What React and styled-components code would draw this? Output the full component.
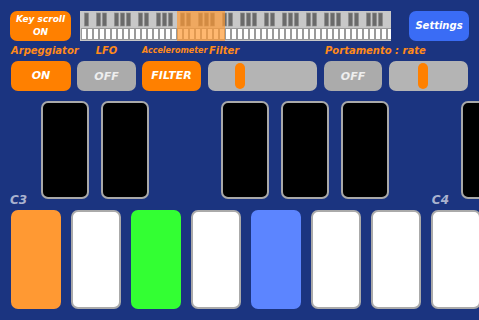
import styled, { createGlobalStyle } from 'styled-components';

const GlobalStyle = createGlobalStyle`
    html, body {
        margin: 0;
        padding: 0;
        background: #1b3480;
    }
    body {
        font-family: "DejaVu Sans", Verdana, sans-serif;
    }
`;

const TOTAL_WHITE = 52;
const KEY_W = 6;
const BLACK_PATTERN = [1, 0, 1, 1, 0, 1, 1]; // after A, B, C, D, E, F, G

const MiniKeyboard = () => {
    const whites = [];
    const blacks = [];
    for (let i = 0; i < TOTAL_WHITE; i++) {
        const x = 1 + i * KEY_W;
        whites.push(<rect key={i} x={x + 0.5} y={17.5} width={KEY_W - 1} height={11} fill='#ffffff' stroke='#9a9a9a' strokeWidth='1' />);
        if (BLACK_PATTERN[i % 7] && i < TOTAL_WHITE - 1) {
            blacks.push(<rect key={i} x={x + KEY_W - 2.5} y={2} width={4} height={13} fill='#6a6a6a' stroke='#8a8a8a' strokeWidth='0.6' />);
        }
    }
    return (
        <MiniBox>
            <svg width='311' height='30' viewBox='0 0 311 30'>
                <rect x='0' y='0' width='311' height='30' fill='#c8c8c8' />
                {blacks}
                {whites}
                <rect x={1 + 16 * KEY_W} y='0' width={8 * KEY_W} height='30' fill='#ff9a33' opacity='0.7' />
            </svg>
        </MiniBox>
    );
};

const blackSlots = [true, true, false, true, true, true, false, true];
const whiteKeys = ['#ff9933', '#ffffff', '#33ff33', '#ffffff', '#5c85ff', '#ffffff', '#ffffff', '#ffffff'];

const App = () => {
    return (
        <>
            <GlobalStyle />
            <Screen>
                <TopBar>
                    <OrangeButton $w={61} $small>
                        Key scroll
                        <br />
                        ON
                    </OrangeButton>
                    <MiniKeyboard />
                    <SettingsButton>Settings</SettingsButton>
                </TopBar>

                <Controls>
                    <Label>Arpeggiator</Label>
                    <Label>LFO</Label>
                    <Label $tiny>Accelerometer</Label>
                    <Label $left>Filter</Label>
                    <Label $left $span>Portamento : rate</Label>

                    <OrangeButton>ON</OrangeButton>
                    <GrayButton>OFF</GrayButton>
                    <OrangeButton>FILTER</OrangeButton>
                    <Slider>
                        <Thumb $pos={27} />
                    </Slider>
                    <GrayButton $inset>OFF</GrayButton>
                    <Slider>
                        <Thumb $pos={29} />
                    </Slider>
                </Controls>

                <BlackRow>
                    {blackSlots.map((on, i) => (on ? <BlackKey key={i} /> : <KeySpacer key={i} />))}
                </BlackRow>

                <OctaveRow>
                    <Octave>C3</Octave>
                    <Octave>C4</Octave>
                </OctaveRow>

                <WhiteRow>
                    {whiteKeys.map((c, i) => (
                        <WhiteKey key={i} $color={c} />
                    ))}
                </WhiteRow>
            </Screen>
        </>
    );
};

export default App;

const Screen = styled.div`
    width: 479px;
    height: 320px;
    overflow: hidden;
    background: #1b3480;
    display: flex;
    flex-direction: column;
    box-sizing: border-box;
    padding-top: 10px;
`;

const TopBar = styled.div`
    display: flex;
    align-items: center;
    height: 31px;
    padding-left: 10px;
`;

const MiniBox = styled.div`
    margin-left: 9px;
    height: 30px;
    line-height: 0;
`;

const buttonBase = `
    box-sizing: border-box;
    height: 30px;
    border-radius: 7px;
    display: flex;
    align-items: center;
    justify-content: center;
    text-align: center;
    font-style: italic;
    font-weight: bold;
    color: #ffffff;
`;

const OrangeButton = styled.div`
    ${buttonBase}
    width: ${(p) => (p.$w ? `${p.$w}px` : 'auto')};
    background: #ff8000;
    font-size: ${(p) => (p.$small ? '9px' : '11px')};
    line-height: ${(p) => (p.$small ? '13px' : '30px')};
`;

const GrayButton = styled.div`
    ${buttonBase}
    margin-left: ${(p) => (p.$inset ? '1px' : '0')};
    background: #ababab;
    color: #eeeeee;
    font-size: 11px;
`;

const SettingsButton = styled.div`
    ${buttonBase}
    width: 60px;
    margin-left: 18px;
    background: #3a6cf5;
    font-size: 10px;
`;

const Controls = styled.div`
    display: grid;
    grid-template-columns: 60px 59px 59px 110px 59px 80px;
    grid-template-rows: 14px 30px;
    column-gap: 6px;
    row-gap: 3px;
    padding-left: 11px;
    margin-top: 3px;
`;

const Label = styled.div`
    color: #ff8a1a;
    font-style: italic;
    font-weight: bold;
    font-size: ${(p) => (p.$tiny ? '8px' : '10px')};
    line-height: 14px;
    white-space: nowrap;
    text-align: ${(p) => (p.$left ? 'left' : 'center')};
    padding-left: ${(p) => (p.$left ? '2px' : '0')};
    grid-column: ${(p) => (p.$span ? 'span 2' : 'auto')};
    align-self: end;
`;

const Slider = styled.div`
    position: relative;
    height: 30px;
    margin-left: 1px;
    border-radius: 7px;
    background: #b4b4b4;
`;

const Thumb = styled.div`
    position: absolute;
    top: 2px;
    left: ${(p) => p.$pos}px;
    width: 10px;
    height: 26px;
    border-radius: 5px;
    background: #ff8000;
`;

const BlackRow = styled.div`
    display: flex;
    gap: 12px;
    padding-left: 41px;
    margin-top: 10px;
`;

const BlackKey = styled.div`
    flex: none;
    width: 48px;
    height: 98px;
    box-sizing: border-box;
    background: #000000;
    border: 2px solid #a9a9a9;
    border-radius: 7px;
`;

const KeySpacer = styled.div`
    flex: none;
    width: 48px;
`;

const OctaveRow = styled.div`
    display: flex;
    justify-content: space-between;
    width: 439px;
    padding-left: 10px;
    margin-top: -4px;
    height: 15px;
`;

const Octave = styled.div`
    color: #aab3cf;
    font-style: italic;
    font-weight: bold;
    font-size: 12px;
    line-height: 11px;
`;

const WhiteRow = styled.div`
    display: flex;
    gap: 10px;
    padding-left: 11px;
`;

const WhiteKey = styled.div`
    flex: none;
    width: 50px;
    height: 99px;
    box-sizing: border-box;
    background: ${(p) => p.$color};
    border: 2px solid ${(p) => (p.$color === '#ffffff' ? '#aaaaaa' : p.$color)};
    border-radius: 7px;
`;
